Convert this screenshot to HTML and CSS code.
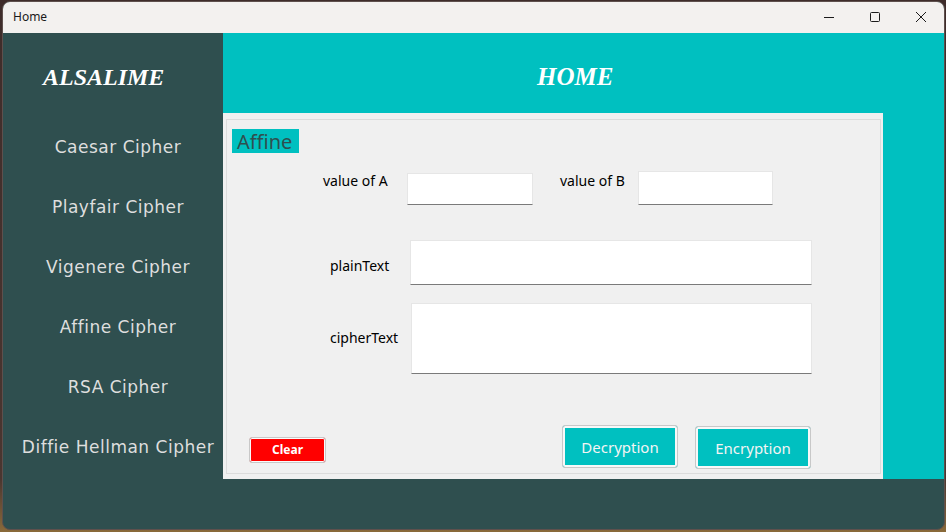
FILE: index.html
```html
<!DOCTYPE html>
<html>
<head>
<meta charset="utf-8">
<title>Home</title>
<link rel="stylesheet" href="styles.css">
</head>
<body>
<div class="window">
  <div class="titlebar">
    <span class="title">Home</span>
    <div class="controls">
      <span class="ctl"><svg width="12" height="12" viewBox="0 0 12 12"><path d="M1 6.5h10" stroke="#1b1b1b" stroke-width="1"/></svg></span>
      <span class="ctl"><svg width="12" height="12" viewBox="0 0 12 12"><rect x="1.5" y="1.5" width="9" height="9" rx="1" fill="none" stroke="#1b1b1b" stroke-width="1"/></svg></span>
      <span class="ctl"><svg width="12" height="12" viewBox="0 0 12 12"><path d="M1 1L11 11M11 1L1 11" stroke="#1b1b1b" stroke-width="1"/></svg></span>
    </div>
  </div>
  <div class="client">
    <nav class="sidebar">
      <div class="brand">ALSALIME</div>
      <div class="nav-item">Caesar Cipher</div>
      <div class="nav-item">Playfair Cipher</div>
      <div class="nav-item">Vigenere Cipher</div>
      <div class="nav-item">Affine Cipher</div>
      <div class="nav-item">RSA Cipher</div>
      <div class="nav-item">Diffie Hellman Cipher</div>
    </nav>
    <main class="main">
      <div class="header">HOME</div>
      <div class="body">
        <section class="panel">
          <div class="group">
            <div class="group-title">Affine</div>
            <div class="row row-ab">
              <label class="lbl lbl-a">value of A</label>
              <div class="field field-a"></div>
              <label class="lbl lbl-b">value of B</label>
              <div class="field field-b"></div>
            </div>
            <div class="row row-plain">
              <label class="lbl lbl-plain">plainText</label>
              <div class="field field-plain"></div>
            </div>
            <div class="row row-cipher">
              <label class="lbl lbl-cipher">cipherText</label>
              <div class="field field-cipher"></div>
            </div>
            <div class="row row-btns">
              <button class="btn btn-clear">Clear</button>
              <button class="btn btn-teal btn-dec">Decryption</button>
              <button class="btn btn-teal btn-enc">Encryption</button>
            </div>
          </div>
        </section>
      </div>
    </main>
  </div>
</div>
</body>
</html>
```
FILE: styles.css
```css
* { box-sizing: border-box; }
html, body {
  margin: 0;
  padding: 0;
  width: 946px;
  height: 532px;
  overflow: hidden;
}
body {
  background: linear-gradient(180deg, #3e2c2a 0%, #4a3630 90%, #8a6a3a 100%);
  font-family: "Noto Sans", "Open Sans", sans-serif;
}
.window {
  margin: 1px 0 0 2px;
  width: 943px;
  height: 529px;
  border: 1px solid #5e504d;
  border-radius: 8px;
  overflow: hidden;
  display: flex;
  flex-direction: column;
  background: #2f4f4f;
}
.titlebar {
  height: 31px;
  flex: none;
  background: #f3f1ef;
  display: flex;
  align-items: center;
  justify-content: space-between;
}
.title {
  font-size: 12px;
  color: #1a1a1a;
  padding-left: 10px;
  padding-bottom: 3px;
}
.controls {
  display: flex;
  height: 100%;
}
.ctl {
  width: 46px;
  height: 100%;
  display: flex;
  align-items: center;
  justify-content: center;
  padding-bottom: 2px;
}
.client {
  flex: 1;
  display: flex;
  align-items: flex-start;
}
.sidebar {
  width: 220px;
  flex: none;
  display: flex;
  flex-direction: column;
}
.brand {
  margin-top: 29px;
  height: 30px;
  line-height: 30px;
  padding-left: 40px;
  font-family: "Liberation Serif", serif;
  font-style: italic;
  font-weight: bold;
  font-size: 24px;
  color: #ffffff;
  margin-bottom: 25px;
}
.nav-item {
  height: 60px;
  line-height: 60px;
  text-align: center;
  padding-left: 10px;
  font-family: "DejaVu Sans", sans-serif;
  font-size: 17px;
  letter-spacing: 0.5px;
  color: #dedede;
  white-space: nowrap;
}
.main {
  width: 721px;
  height: 446px;
  background: #00c0c0;
  display: flex;
  flex-direction: column;
}
.header {
  height: 80px;
  flex: none;
  padding-left: 314px;
  padding-top: 29px;
  line-height: 30px;
  font-family: "Liberation Serif", serif;
  font-style: italic;
  font-weight: bold;
  font-size: 25px;
  color: #ffffff;
}
.body {
  flex: 1;
  display: flex;
}
.panel {
  width: 660px;
  height: 366px;
  background: #f0f0f0;
  padding: 6px 2px 5px 3px;
}
.group {
  height: 100%;
  border: 1px solid #dcdcdc;
  display: flex;
  flex-direction: column;
}
.group-title {
  margin: 9px 0 0 5px;
  width: 67px;
  height: 24px;
  background: #00c0c0;
  color: #2f4f4f;
  font-size: 20px;
  line-height: 26px;
  padding-left: 5px;
}
.row {
  display: flex;
}
.lbl {
  font-size: 14px;
  line-height: 18px;
  color: #000;
  flex: none;
}
.field {
  background: #fff;
  border: 1px solid #e6e6e6;
  border-bottom: 1px solid #7a7a7a;
  flex: none;
}
.row-ab {
  margin-top: 18px;
  padding-left: 96px;
  align-items: flex-start;
}
.lbl-a { width: 84px; margin-top: 1px; }
.field-a { width: 126px; height: 32px; margin-top: 2px; }
.lbl-b { width: 78px; margin-left: 27px; margin-top: 1px; }
.field-b { width: 135px; height: 34px; }
.row-plain {
  margin-top: 35px;
  padding-left: 103px;
  align-items: center;
}
.lbl-plain { width: 80px; margin-top: 6px; }
.field-plain { width: 402px; height: 45px; }
.row-cipher {
  margin-top: 18px;
  padding-left: 103px;
  align-items: center;
}
.lbl-cipher { width: 81px; margin-top: -2px; }
.field-cipher { width: 401px; height: 71px; }
.row-btns {
  margin-top: 51px;
  padding-left: 22px;
  align-items: flex-start;
}
.btn {
  border: 1px solid #c8c8c8;
  border-radius: 3px;
  color: #fff;
  padding: 0;
  cursor: pointer;
  font-family: "Noto Sans", "Open Sans", sans-serif;
}
.btn-clear {
  width: 77px;
  height: 26px;
  margin-top: 12px;
  background: #ff0000;
  box-shadow: inset 0 0 0 1px #fbfbfb;
  font-size: 12px;
  font-weight: bold;
  line-height: 22px;
}
.btn-teal {
  width: 116px;
  height: 43px;
  background: #00c0c0;
  box-shadow: inset 0 0 0 2px #f8f8f8;
  font-size: 15px;
  color: #f4f4f4;
}
.btn-dec { margin-left: 236px; }
.btn-enc { margin-left: 17px; margin-top: 1px; }
```
